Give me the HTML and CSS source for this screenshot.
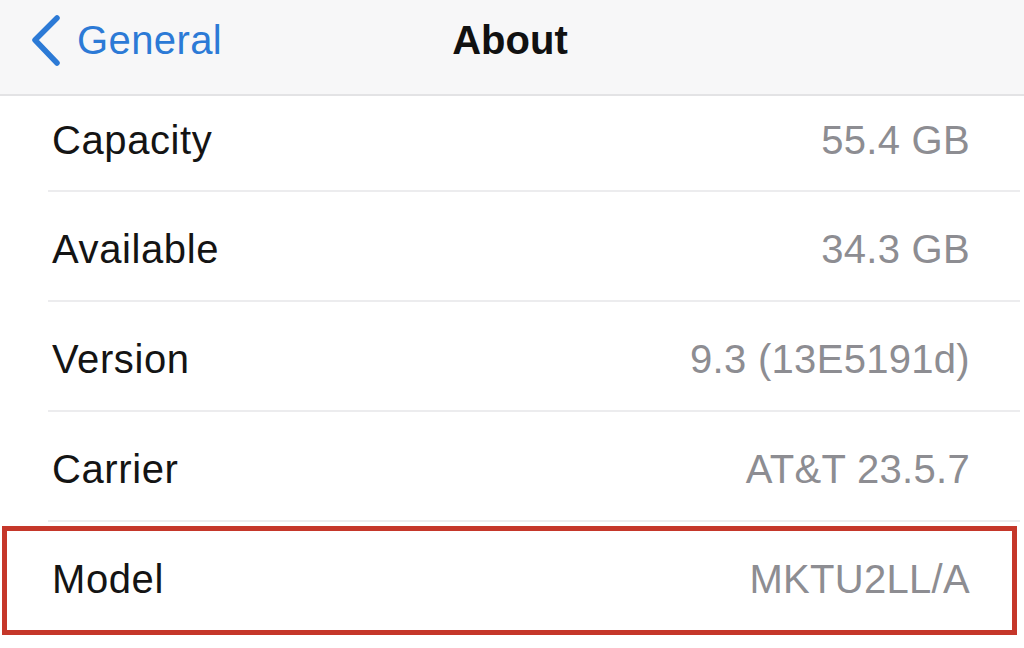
FILE: index.html
```html
<!DOCTYPE html>
<html>
<head>
<meta charset="utf-8">
<link rel="stylesheet" href="styles.css">
</head>
<body>
<div class="screen">
  <header class="nav">
    <div class="nav-back">
      <svg class="chevron" width="34" height="54" viewBox="0 0 34 54">
        <path d="M28 4 L6 26 L28 49" fill="none" stroke="#2c7ad6" stroke-width="5.5" stroke-linecap="round" stroke-linejoin="round"/>
      </svg>
      <span class="back-label">General</span>
    </div>
    <div class="nav-title">About</div>
    <div class="nav-spacer"></div>
  </header>
  <main class="list">
    <div class="row row-first"><span class="label">Capacity</span><span class="value">55.4 GB</span></div>
    <div class="row"><span class="label">Available</span><span class="value">34.3 GB</span></div>
    <div class="row"><span class="label">Version</span><span class="value">9.3 (13E5191d)</span></div>
    <div class="row"><span class="label">Carrier</span><span class="value">AT&amp;T 23.5.7</span></div>
    <div class="row row-model"><span class="label">Model</span><span class="value">MKTU2LL/A</span><div class="highlight"></div></div>
  </main>
</div>
</body>
</html>
```
FILE: styles.css
```css
* { box-sizing: border-box; }
html, body {
  margin: 0;
  padding: 0;
  background: #ffffff;
}
body {
  font-family: "Liberation Sans", Arial, sans-serif;
  width: 1024px;
  height: 648px;
  overflow: hidden;
}
.screen {
  width: 1024px;
  height: 648px;
  display: flex;
  flex-direction: column;
}
.nav {
  height: 96px;
  flex: none;
  background: #f7f7f8;
  border-bottom: 2px solid #e3e3e5;
  display: grid;
  grid-template-columns: 1fr auto 1fr;
  align-items: center;
  padding-bottom: 14px;
}
.nav-back {
  display: flex;
  align-items: center;
  gap: 14px;
  padding-left: 29px;
  color: #2c7ad6;
}
.chevron { display: block; margin-top: 2px; }
.back-label {
  font-size: 40px;
  line-height: 1;
  letter-spacing: 0.4px;
  color: #2c7ad6;
}
.nav-title {
  font-size: 40px;
  font-weight: bold;
  color: #111111;
  line-height: 1;
  margin-left: -4px;
}
.list {
  display: flex;
  flex-direction: column;
}
.row {
  position: relative;
  height: 110px;
  display: flex;
  align-items: center;
  justify-content: space-between;
  padding: 4px 54px 0 52px;
  font-size: 40px;
}
.row::after {
  content: "";
  position: absolute;
  left: 48px;
  right: 4px;
  bottom: 0;
  height: 2px;
  background: #ececee;
}
.row-first {
  height: 96px;
  padding-top: 0;
  padding-bottom: 8px;
}
.row-model::after { display: none; }
.label { color: #141414; letter-spacing: 0.6px; }
.value { color: #8d8d92; letter-spacing: 0.3px; }
.highlight {
  position: absolute;
  left: 2px;
  top: 4px;
  width: 1015px;
  height: 109px;
  border: 5px solid #c5372a;
  pointer-events: none;
}
```
